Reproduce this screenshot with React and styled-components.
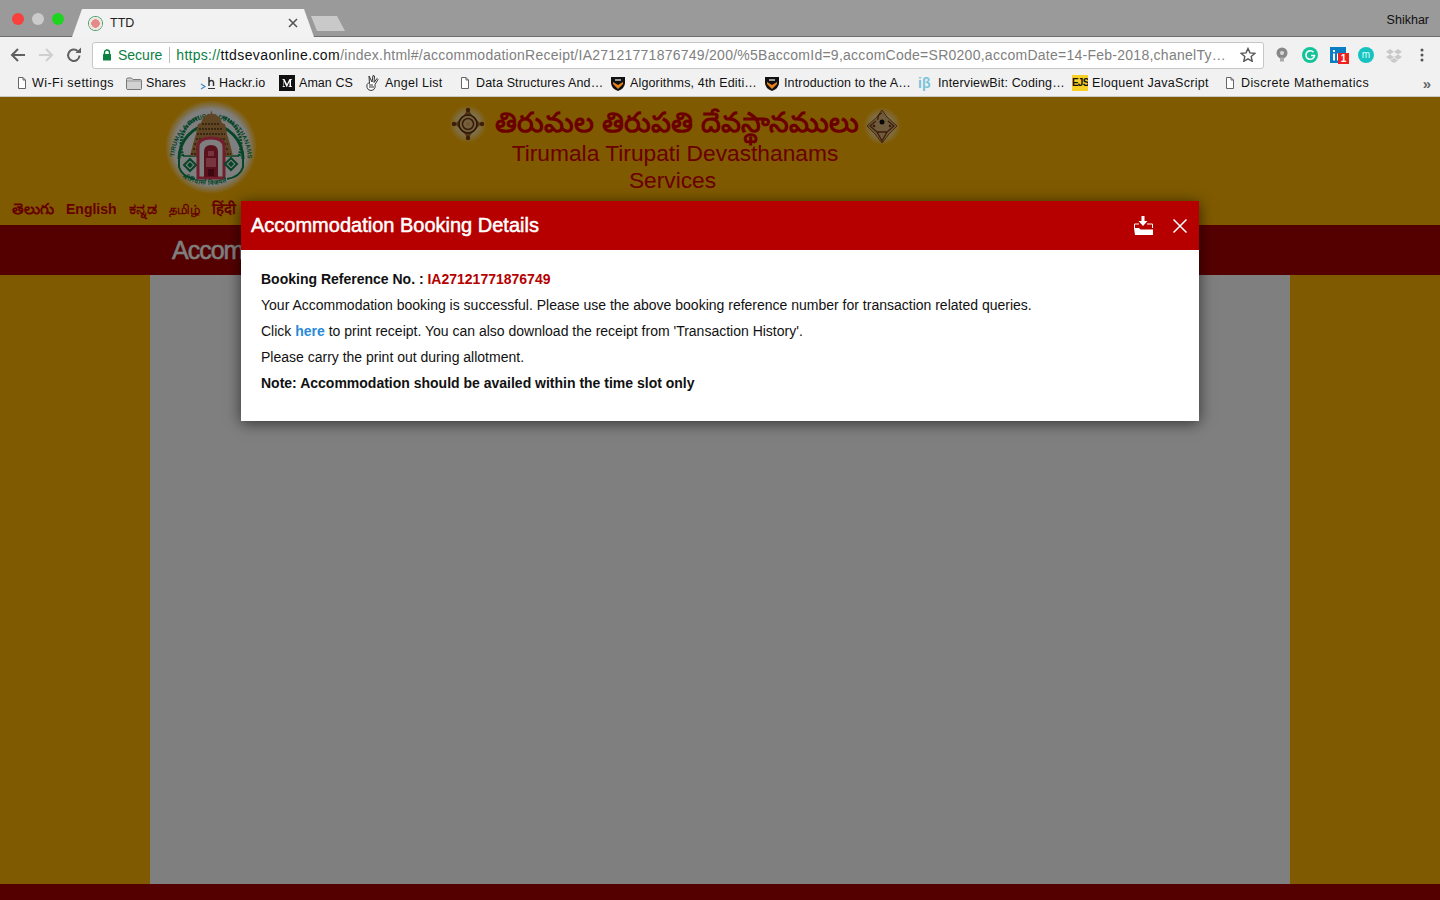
import React from "react";
import styled, { createGlobalStyle } from "styled-components";

const GlobalStyle = createGlobalStyle`
  html, body { margin: 0; padding: 0; height: 100%; overflow: hidden; }
  body { font-family: "Liberation Sans", Arial, sans-serif; background: #7f5a00; }
`;

// width = distance to the next bookmark, slot = icon plus its gap to the label
const bookmarks = [
  { icon: "doc", label: "Wi-Fi settings", width: 110, slot: 16, track: 0.45 },
  { icon: "folder", label: "Shares", width: 74, slot: 20, track: 0.05 },
  { icon: "hackr", label: "Hackr.io", width: 79, slot: 19 },
  { icon: "medium", label: "Aman CS", width: 87, slot: 20, track: 0.05 },
  { icon: "hand", label: "Angel List", width: 93, slot: 19, track: 0.25 },
  { icon: "doc", label: "Data Structures And…", width: 152, slot: 17 },
  { icon: "shield", label: "Algorithms, 4th Editi…", width: 154, slot: 19 },
  { icon: "shield", label: "Introduction to the A…", width: 153, slot: 19 },
  { icon: "ib", label: "InterviewBit: Coding…", width: 154, slot: 20 },
  { icon: "ejs", label: "Eloquent JavaScript", width: 152, slot: 20, track: 0.3 },
  { icon: "doc", label: "Discrete Mathematics", width: 150, slot: 17, track: 0.4 },
];

const DocIcon = () => (
  <svg width="12" height="14" viewBox="0 0 12 14">
    <path d="M2.5 1.5h4.5l2.5 2.5v8.5h-7z M7 1.5v2.5h2.5" fill="#fff" stroke="#666" />
  </svg>
);

const FolderIcon = () => (
  <svg width="16" height="13" viewBox="0 0 16 13">
    <path d="M.5 2.5q0-1.5 1.5-1.5h3.5l1.5 1.5h7.500q1 0 1 1v8q0 1-1 1h-12.500q-1.500 0-1.500-1z" fill="#d2d2d2" stroke="#777" />
    <path d="M1 4h14" stroke="#999" />
  </svg>
);

const HackrIcon = () => (
  <svg width="16" height="15" viewBox="0 0 16 15">
    <path d="M1 8l4 2.500-4 2.500" fill="none" stroke="#3f88c8" strokeWidth="1.200" />
    <path d="M9 1v9M9 6q1-1.500 2.500-1.500t2 1.500v4" fill="none" stroke="#333" strokeWidth="1.500" />
    <path d="M8 12.500h7" stroke="#333" />
  </svg>
);

const MediumIcon = () => (
  <svg width="16" height="16" viewBox="0 0 16 16">
    <rect width="16" height="16" fill="#111" />
    <path d="M3 4h2.500l2.500 5 2.500-5h2.500v.5l-1 .5v6l1 .5v.5h-3.500v-.5l1-.5v-4.500l-2.500 5.500h-.5l-2.500-5.500v4.500l1 .5v.5h-2.500v-.5l1-.5v-6l-1-.5z" fill="#fff" />
  </svg>
);

const HandIcon = () => (
  <svg width="14" height="16" viewBox="0 0 14 16">
    <path d="M3 1l3 6 1-6.500 1.500.5-.5 6.500 3-4 1 1-3 5v3q-1 3-4 3t-4-3v-3l1.500-1.500 1 .5z" fill="#fff" stroke="#333" />
    <path d="M3 10h4M3 12h5" stroke="#333" />
  </svg>
);

const ShieldIcon = () => (
  <svg width="14" height="15" viewBox="0 0 14 15">
    <path d="M0 1h14v6q0 5-7 8-7-3-7-8z" fill="#111" />
    <path d="M2 6l5 3 5-3v2l-5 5-5-5z" fill="#e8821e" />
    <path d="M4 3h6v2h-6z" fill="#999" />
  </svg>
);

const IconFor = ({ name }) => {
  if (name === "doc") return <DocIcon />;
  if (name === "folder") return <FolderIcon />;
  if (name === "hackr") return <HackrIcon />;
  if (name === "medium") return <MediumIcon />;
  if (name === "hand") return <HandIcon />;
  if (name === "shield") return <ShieldIcon />;
  if (name === "ib") return <IbMark>iβ</IbMark>;
  return <EjsMark>EJS</EjsMark>;
};

const Emblem = () => (
  <svg width="92" height="95" viewBox="0 0 92 95">
    <defs>
      <radialGradient id="emblem-glow" cx="50%" cy="50%" r="50%">
        <stop offset="80%" stopColor="#fff" />
        <stop offset="100%" stopColor="#fff" stopOpacity="0" />
      </radialGradient>
      <path id="emblem-arc" d="M9.500 58A36.500 40 0 1 1 82.500 58" fill="none" />
      <path id="emblem-motto" d="M17 78Q46 92 75 77" fill="none" />
    </defs>
    <ellipse cx="46" cy="47" rx="46" ry="47" fill="url(#emblem-glow)" />
    <text fontSize="6.200" fontWeight="700" fill="#0c8a4e" letterSpacing=".15">
      <textPath href="#emblem-arc" startOffset="1%">TIRUMALA TIRUPATI DEVASTHANAMS</textPath>
    </text>
    <path d="M14 59A32 34 0 1 1 78 59" fill="none" stroke="#0c8a4e" strokeWidth="3" />
    <path d="M18 56A28 30 0 0 1 34 17M74 56A28 30 0 0 0 58 17" fill="none" stroke="#0c8a4e" strokeWidth="3" strokeDasharray="2 1" />
    <path d="M14 59v8q3 10 16 12M78 59v8q-3 10-16 12" fill="none" stroke="#0c8a4e" strokeWidth="2" />
    <path d="M18 56h56" stroke="#0c8a4e" strokeWidth="1.500" />
    <path d="M46 10l1.500 4q8 1 9.500 9l3 1 2 10 3 10 3 12H25l3-12 3-10 2-10 3-1q1.500-8 9.500-9z" fill="#c08a4a" />
    <path d="M37 24h18M34 29h24M32 34h28M31 39h30M29 44h34M28 49h36M26 54h40" stroke="#5a3d18" strokeWidth="1.300" strokeDasharray="2 1" />
    <path d="M33 78V47q0-9 13-9t13 9v31z" fill="#fff" stroke="#e83a5a" strokeWidth="3" />
    <path d="M39 77V52q0-7 7-7t7 7v25z" fill="#b52238" />
    <path d="M43 51h6v5h-6zM41 58h10v9h-10z" fill="#ef6a80" />
    <path d="M43 69h6v7h-6z" fill="#7a1022" />
    <path d="M25 59l6 6-6 6-6-6zM66 58l6 6-6 6-6-6z" fill="#fff" stroke="#0c8a4e" strokeWidth="2" />
    <path d="M25 62l3 3-3 3-3-3zM66 61l3 3-3 3-3-3z" fill="#0c8a4e" />
    <text fontSize="6.500" fontWeight="700" fill="#0c8a4e">
      <textPath href="#emblem-motto">श्रीनिवासो विजयते</textPath>
    </text>
  </svg>
);

const OrnamentGlow = ({ id }) => (
  <defs>
    <radialGradient id={id} cx="50%" cy="50%" r="50%">
      <stop offset="55%" stopColor="#ffe9b0" stopOpacity=".9" />
      <stop offset="100%" stopColor="#ffe9b0" stopOpacity="0" />
    </radialGradient>
  </defs>
);

const Chakra = () => (
  <svg width="38" height="38" viewBox="0 0 38 38">
    <OrnamentGlow id="chakra-glow" />
    <circle cx="19" cy="19" r="19" fill="url(#chakra-glow)" />
    <path d="M19 4l4 6 9 9-9 9-4 6-4-6-9-9 9-9z" fill="#a8692a" />
    <circle cx="19" cy="5" r="2.200" fill="#7a3a10" />
    <circle cx="19" cy="33" r="2.200" fill="#7a3a10" />
    <circle cx="5" cy="19" r="2.200" fill="#7a3a10" />
    <circle cx="33" cy="19" r="2.200" fill="#7a3a10" />
    <circle cx="19" cy="19" r="9" fill="#e8c078" stroke="#5a2a08" strokeWidth="1.500" />
    <circle cx="19" cy="19" r="5.500" fill="none" stroke="#6d3610" strokeWidth="1.500" />
    <circle cx="19" cy="19" r="2" fill="#e8a860" />
  </svg>
);

const Conch = () => (
  <svg width="38" height="38" viewBox="0 0 38 38">
    <OrnamentGlow id="conch-glow" />
    <circle cx="19" cy="19" r="19" fill="url(#conch-glow)" />
    <path d="M19 3l5 7 10 9-8 8-7 9-7-9-8-8 10-9z" fill="#e0b878" stroke="#8a4a18" />
    <path d="M19 6q-5 2-4 7M13 14l-6 5 7 6M25 14l6 5-7 6M19 34l-5-9h10z" fill="none" stroke="#7a3a10" strokeWidth="1.300" />
    <circle cx="19" cy="15" r="2.500" fill="#111" />
    <circle cx="11" cy="19" r="1.300" fill="#6d3610" />
    <circle cx="27" cy="19" r="1.300" fill="#6d3610" />
  </svg>
);

const App = () => {
  return (
    <Screen>
      <GlobalStyle />
      <TabStrip>
        <Lights>
          <Light color="#f8403c" />
          <Light color="#cbcbcb" />
          <Light color="#1ed41f" />
        </Lights>
        <Tab>
          <Favicon />
          <TabTitle>TTD</TabTitle>
          <TabClose>
            <svg width="10" height="10" viewBox="0 0 10 10">
              <path d="M1 1l8 8M9 1l-8 8" stroke="#555" strokeWidth="1.600" />
            </svg>
          </TabClose>
        </Tab>
        <NewTab />
        <UserName>Shikhar</UserName>
      </TabStrip>

      <Toolbar>
        <NavIcons>
          <svg width="16" height="14" viewBox="0 0 16 14">
            <path d="M15 7H2M8 1L2 7l6 6" fill="none" stroke="#606060" strokeWidth="2" />
          </svg>
          <svg width="16" height="14" viewBox="0 0 16 14">
            <path d="M1 7h13M8 1l6 6-6 6" fill="none" stroke="#cfcfcf" strokeWidth="2" />
          </svg>
          <svg width="16" height="16" viewBox="0 0 16 16">
            <path d="M13.500 8.500a5.700 5.700 0 1 1-1.700-4.300" fill="none" stroke="#606060" strokeWidth="2" />
            <path d="M9.500 6h5.500V.5z" fill="#606060" />
          </svg>
        </NavIcons>
        <AddressBar>
          <svg width="10" height="12" viewBox="0 0 10 12">
            <path d="M2.500 5V3.500a2.500 2.500 0 0 1 5 0V5" fill="none" stroke="#0b8043" strokeWidth="1.400" />
            <rect x="1" y="5" width="8" height="6.500" rx=".5" fill="#0b8043" />
          </svg>
          <SecureLabel>Secure</SecureLabel>
          <UrlDivider />
          <Url>
            <UrlScheme>https://</UrlScheme>
            <UrlHost>ttdsevaonline.com</UrlHost>
            /index.html#/accommodationReceipt/IA27121771876749/200/%5BaccomId=9,accomCode=SR0200,accomDate=14-Feb-2018,chanelTy…
          </Url>
          <svg width="16" height="15" viewBox="0 0 16 15">
            <path d="M8 1.500l2 4.400 4.800.5-3.600 3.200 1 4.700L8 11.900l-4.200 2.400 1-4.700L1.200 6.400 6 5.900z" fill="none" stroke="#555" strokeWidth="1.400" />
          </svg>
        </AddressBar>
        <Extensions>
          <svg width="14" height="16" viewBox="0 0 14 16">
            <circle cx="7" cy="6" r="5.500" fill="#888" />
            <circle cx="7" cy="6" r="2" fill="#d8d8d8" />
            <rect x="5" y="10.500" width="4" height="4" fill="#aaa" />
          </svg>
          <svg width="16" height="16" viewBox="0 0 16 16">
            <circle cx="8" cy="8" r="8" fill="#15c39a" />
            <path d="M11.500 5.200a4.300 4.300 0 1 0 1 3.300H9" fill="none" stroke="#fff" strokeWidth="1.600" />
          </svg>
          <LinkedInBox>
            <svg width="16" height="16" viewBox="0 0 16 16">
              <rect width="16" height="16" fill="#0a7ec2" />
              <path d="M3 6.500h2v7H3zM3 3h2v2H3zM7 6.500h2v1q1-1.200 2.500-1.200 2 0 2 3v4.200h-2V10q0-1.500-1.200-1.500T9 10v3.500H7z" fill="#fff" />
            </svg>
            <LinkedInBadge>1</LinkedInBadge>
          </LinkedInBox>
          <MintCircle>m</MintCircle>
          <svg width="16" height="15" viewBox="0 0 16 15">
            <path d="M4 1L0 3.700l4 2.700L8 3.700zM12 1L8 3.700l4 2.700 4-2.700zM4 6.400L0 9.100l4 2.700 4-2.700zM12 6.400L8 9.100l4 2.700 4-2.700zM4 12.600L8 15l4-2.400-4-2.500z" fill="#c9c9c9" />
          </svg>
          <svg width="4" height="14" viewBox="0 0 4 14">
            <circle cx="2" cy="2" r="1.500" fill="#555" />
            <circle cx="2" cy="7" r="1.500" fill="#555" />
            <circle cx="2" cy="12" r="1.500" fill="#555" />
          </svg>
        </Extensions>
      </Toolbar>

      <BookmarkBar>
        {bookmarks.map((item, index) => (
          <Bookmark key={`bookmark-${index}`} $width={item.width} $track={item.track ?? 0.15}>
            <BookmarkIcon $slot={item.slot}>
              <IconFor name={item.icon} />
            </BookmarkIcon>
            {item.label}
          </Bookmark>
        ))}
        <MoreBookmarks>»</MoreBookmarks>
      </BookmarkBar>

      <Viewport>
        <Page>
          <Header>
            <HeaderLeft>
              <EmblemSlot>
                <Emblem />
              </EmblemSlot>
              <Languages>
                <Language $size={15}>తెలుగు</Language>
                <Language $size={14}>English</Language>
                <Language $size={16}>ಕನ್ನಡ</Language>
                <Language $size={12.5}>தமிழ்</Language>
                <Language $size={15}>हिंदी</Language>
              </Languages>
            </HeaderLeft>
            <HeaderCenter>
              <TeluguRow>
                <Chakra />
                <TeluguTitle>తిరుమల తిరుపతి దేవస్థానములు</TeluguTitle>
                <ConchSlot>
                  <Conch />
                </ConchSlot>
              </TeluguRow>
              <EnglishTitle>Tirumala Tirupati Devasthanams</EnglishTitle>
              <ServicesTitle>Services</ServicesTitle>
            </HeaderCenter>
          </Header>
          <TitleBand>
            <BandText>Accommodation Booking Details</BandText>
          </TitleBand>
          <Body>
            <BodyContent />
          </Body>
          <Footer />
        </Page>
        <Overlay />
        <Modal>
          <ModalHeader>
            <ModalTitle>Accommodation Booking Details</ModalTitle>
            <ModalActions>
              <svg width="19" height="20" viewBox="0 0 19 20">
                <path d="M7.500 0h3v5h3l-4.500 5-4.500-5h3z" fill="#fff" />
                <path d="M.5 12V8H5M13 8h5.500v4" fill="none" stroke="#fff" />
                <path d="M0 12h5l1.500 1.500H19V19H1z" fill="#fff" />
              </svg>
              <svg width="14" height="14" viewBox="0 0 14 14">
                <path d="M.5.5l13 13M13.500.5l-13 13" stroke="#fff" strokeWidth="1.500" />
              </svg>
            </ModalActions>
          </ModalHeader>
          <ModalBody>
            <ModalLine $bold>
              Booking Reference No. : <RefNumber>IA27121771876749</RefNumber>
            </ModalLine>
            <ModalLine>
              Your Accommodation booking is successful. Please use the above booking reference number for transaction related queries.
            </ModalLine>
            <ModalLine>
              Click <ReceiptLink>here</ReceiptLink> to print receipt. You can also download the receipt from 'Transaction History'.
            </ModalLine>
            <ModalLine>Please carry the print out during allotment.</ModalLine>
            <ModalLine $bold>Note: Accommodation should be availed within the time slot only</ModalLine>
          </ModalBody>
        </Modal>
      </Viewport>
    </Screen>
  );
};

const Screen = styled.div`
  width: 1440px;
  height: 900px;
  display: flex;
  flex-direction: column;
  overflow: hidden;
`;

const TabStrip = styled.div`
  height: 36px;
  flex-shrink: 0;
  display: flex;
  align-items: flex-end;
  background: #9a9a9a;
  border-bottom: 1px solid #6f6f6f;
  position: relative;
`;

const Lights = styled.div`
  display: flex;
  gap: 8px;
  align-self: flex-start;
  padding: 13px 0 0 12px;
  width: 60px;
`;

const Light = styled.span`
  width: 12px;
  height: 12px;
  border-radius: 50%;
  background: ${({ color }) => color};
`;

const Tab = styled.div`
  width: 242px;
  height: 28px;
  margin-bottom: -1px;
  box-sizing: border-box;
  padding: 0 16px;
  display: flex;
  align-items: center;
  background: #f2f2f2;
  clip-path: polygon(0 100%, 10px 0, 232px 0, 242px 100%);
`;

const Favicon = styled.span`
  width: 15px;
  height: 15px;
  border-radius: 50%;
  background: radial-gradient(circle, #e58a8a 0 38%, #f0e6da 42% 60%, #3fa277 66%);
`;

const TabTitle = styled.span`
  margin: 0 0 1px 7px;
  flex: 1;
  font-size: 12.5px;
  color: #222;
`;

const TabClose = styled.span`
  display: flex;
`;

const NewTab = styled.div`
  width: 34px;
  height: 15px;
  margin: 0 0 5px -3px;
  background: #c9c9c9;
  clip-path: polygon(6px 100%, 0 0, 26px 0, 34px 100%);
`;

const UserName = styled.span`
  margin-left: auto;
  align-self: flex-start;
  padding: 13px 11px 0 0;
  font-size: 12.5px;
  color: #111;
`;

const Toolbar = styled.div`
  height: 33px;
  flex-shrink: 0;
  box-sizing: border-box;
  padding-top: 5px;
  display: flex;
  background: #f1f1f1;
`;

const NavIcons = styled.div`
  width: 92px;
  height: 26px;
  box-sizing: border-box;
  padding: 0 10px;
  display: flex;
  align-items: center;
  justify-content: space-between;
`;

const AddressBar = styled.div`
  width: 1172px;
  height: 27px;
  box-sizing: border-box;
  padding: 0 7px 2px 9px;
  display: flex;
  align-items: center;
  background: #fff;
  border: 1px solid #c6c6c6;
  border-radius: 3px;
`;

const SecureLabel = styled.span`
  margin-left: 6px;
  font-size: 14px;
  color: #0b8043;
`;

const UrlDivider = styled.span`
  width: 1px;
  height: 16px;
  margin: 0 6px 0 7px;
  background: #bdbdbd;
`;

const Url = styled.span`
  flex: 1;
  min-width: 0;
  font-size: 14px;
  letter-spacing: 0.26px;
  color: #808080;
  white-space: nowrap;
  overflow: hidden;
`;

const UrlScheme = styled.span`
  color: #0b8043;
`;

const UrlHost = styled.span`
  letter-spacing: 0.4px;
  color: #111;
`;

const Extensions = styled.div`
  flex: 1;
  height: 26px;
  padding-left: 4px;
  display: grid;
  grid-template-columns: repeat(6, 28px);
  align-items: center;
  justify-items: center;
`;

const LinkedInBox = styled.span`
  width: 16px;
  height: 16px;
  position: relative;
  display: block;
`;

const LinkedInBadge = styled.span`
  position: absolute;
  left: 8px;
  top: 6px;
  width: 11px;
  height: 11px;
  background: #f02020;
  color: #fff;
  font-size: 10px;
  font-weight: 700;
  line-height: 11px;
  text-align: center;
`;

const MintCircle = styled.span`
  width: 16px;
  height: 16px;
  border-radius: 50%;
  background: #17c3c0;
  color: #d8fff8;
  font-size: 10px;
  line-height: 15px;
  text-align: center;
`;

const BookmarkBar = styled.div`
  height: 27px;
  flex-shrink: 0;
  box-sizing: border-box;
  padding-left: 16px;
  display: flex;
  align-items: center;
  background: #f1f1f1;
  border-bottom: 1px solid #c8c8c8;
`;

const Bookmark = styled.span`
  width: ${({ $width }) => $width}px;
  flex-shrink: 0;
  display: flex;
  align-items: center;
  font-size: 12.5px;
  letter-spacing: ${({ $track }) => $track}px;
  color: #111;
  white-space: nowrap;
`;

const BookmarkIcon = styled.span`
  width: ${({ $slot }) => $slot}px;
  flex-shrink: 0;
  display: flex;
  align-items: center;
`;

const IbMark = styled.span`
  font-size: 14px;
  font-weight: 700;
  color: #79c4d8;
`;

const EjsMark = styled.span`
  width: 16px;
  height: 16px;
  overflow: hidden;
  background: #f7d026;
  color: #111;
  font-size: 10px;
  font-weight: 700;
  line-height: 16px;
  text-align: center;
  letter-spacing: -0.8px;
`;

const MoreBookmarks = styled.span`
  margin-left: auto;
  padding-right: 9px;
  font-size: 15px;
  font-weight: 700;
  color: #666;
`;

const Viewport = styled.div`
  flex: 1;
  min-height: 0;
  position: relative;
`;

const Page = styled.div`
  height: 100%;
  display: flex;
  flex-direction: column;
  background: #ffb400;
`;

const Header = styled.header`
  height: 128px;
  flex-shrink: 0;
  display: flex;
`;

const HeaderLeft = styled.div`
  width: 445px;
  display: flex;
  flex-direction: column;
`;

const EmblemSlot = styled.div`
  height: 101px;
  padding: 3px 0 0 165px;
  box-sizing: border-box;
`;

const Languages = styled.nav`
  display: flex;
  align-items: baseline;
  gap: 12px;
  padding-left: 12px;
`;

const Language = styled.span`
  font-size: ${({ $size }) => $size}px;
  font-weight: 700;
  color: #cc0000;
`;

const HeaderCenter = styled.div`
  width: 460px;
  display: flex;
  flex-direction: column;
  align-items: center;
  color: #d60000;
`;

const TeluguRow = styled.div`
  display: flex;
  align-items: center;
  justify-content: center;
  gap: 8px;
  height: 42px;
  padding-top: 12px;
  box-sizing: border-box;
  white-space: nowrap;
`;

const TeluguTitle = styled.span`
  padding-top: 4px;
  font-size: 28px;
  font-weight: 700;
`;

const ConchSlot = styled.span`
  display: flex;
  margin-left: -4px;
  padding-top: 3px;
`;

const EnglishTitle = styled.div`
  margin-top: 1px;
  font-size: 22.75px;
  line-height: 27px;
`;

const ServicesTitle = styled.div`
  padding-right: 5px;
  font-size: 22.75px;
  line-height: 26px;
`;

const TitleBand = styled.div`
  height: 50px;
  flex-shrink: 0;
  box-sizing: border-box;
  padding-left: 172px;
  display: flex;
  align-items: center;
  background: #ab0000;
`;

const BandText = styled.span`
  font-size: 25px;
  letter-spacing: -1px;
  -webkit-text-stroke: 0.5px #fff;
  color: #fff;
`;

const Body = styled.main`
  flex: 1;
  padding: 0 150px;
`;

const BodyContent = styled.div`
  height: 100%;
  background: #fff;
`;

const Footer = styled.footer`
  height: 16px;
  flex-shrink: 0;
  background: #ab0000;
`;

const Overlay = styled.div`
  position: absolute;
  inset: 0;
  background: rgba(0, 0, 0, 0.5);
`;

const Modal = styled.div`
  position: absolute;
  left: 241px;
  top: 104px;
  width: 958px;
  background: #fff;
  box-shadow: 0 2px 14px rgba(0, 0, 0, 0.6);
`;

const ModalHeader = styled.div`
  height: 49px;
  box-sizing: border-box;
  padding: 0 12px 0 10px;
  display: flex;
  align-items: center;
  justify-content: space-between;
  background: #b60000;
`;

const ModalTitle = styled.h2`
  margin: 0;
  font-size: 20px;
  font-weight: 400;
  -webkit-text-stroke: 0.5px #fff;
  color: #fff;
`;

const ModalActions = styled.div`
  display: flex;
  align-items: center;
  gap: 20px;
`;

const ModalBody = styled.div`
  height: 171px;
  box-sizing: border-box;
  padding: 16px 20px 0;
`;

const ModalLine = styled.p`
  margin: 0;
  font-size: 14px;
  line-height: 26px;
  font-weight: ${({ $bold }) => ($bold ? 700 : 400)};
  color: #111;
`;

const RefNumber = styled.span`
  color: #b60000;
`;

const ReceiptLink = styled.a`
  font-weight: 700;
  color: #2a8ad8;
`;

export default App;
